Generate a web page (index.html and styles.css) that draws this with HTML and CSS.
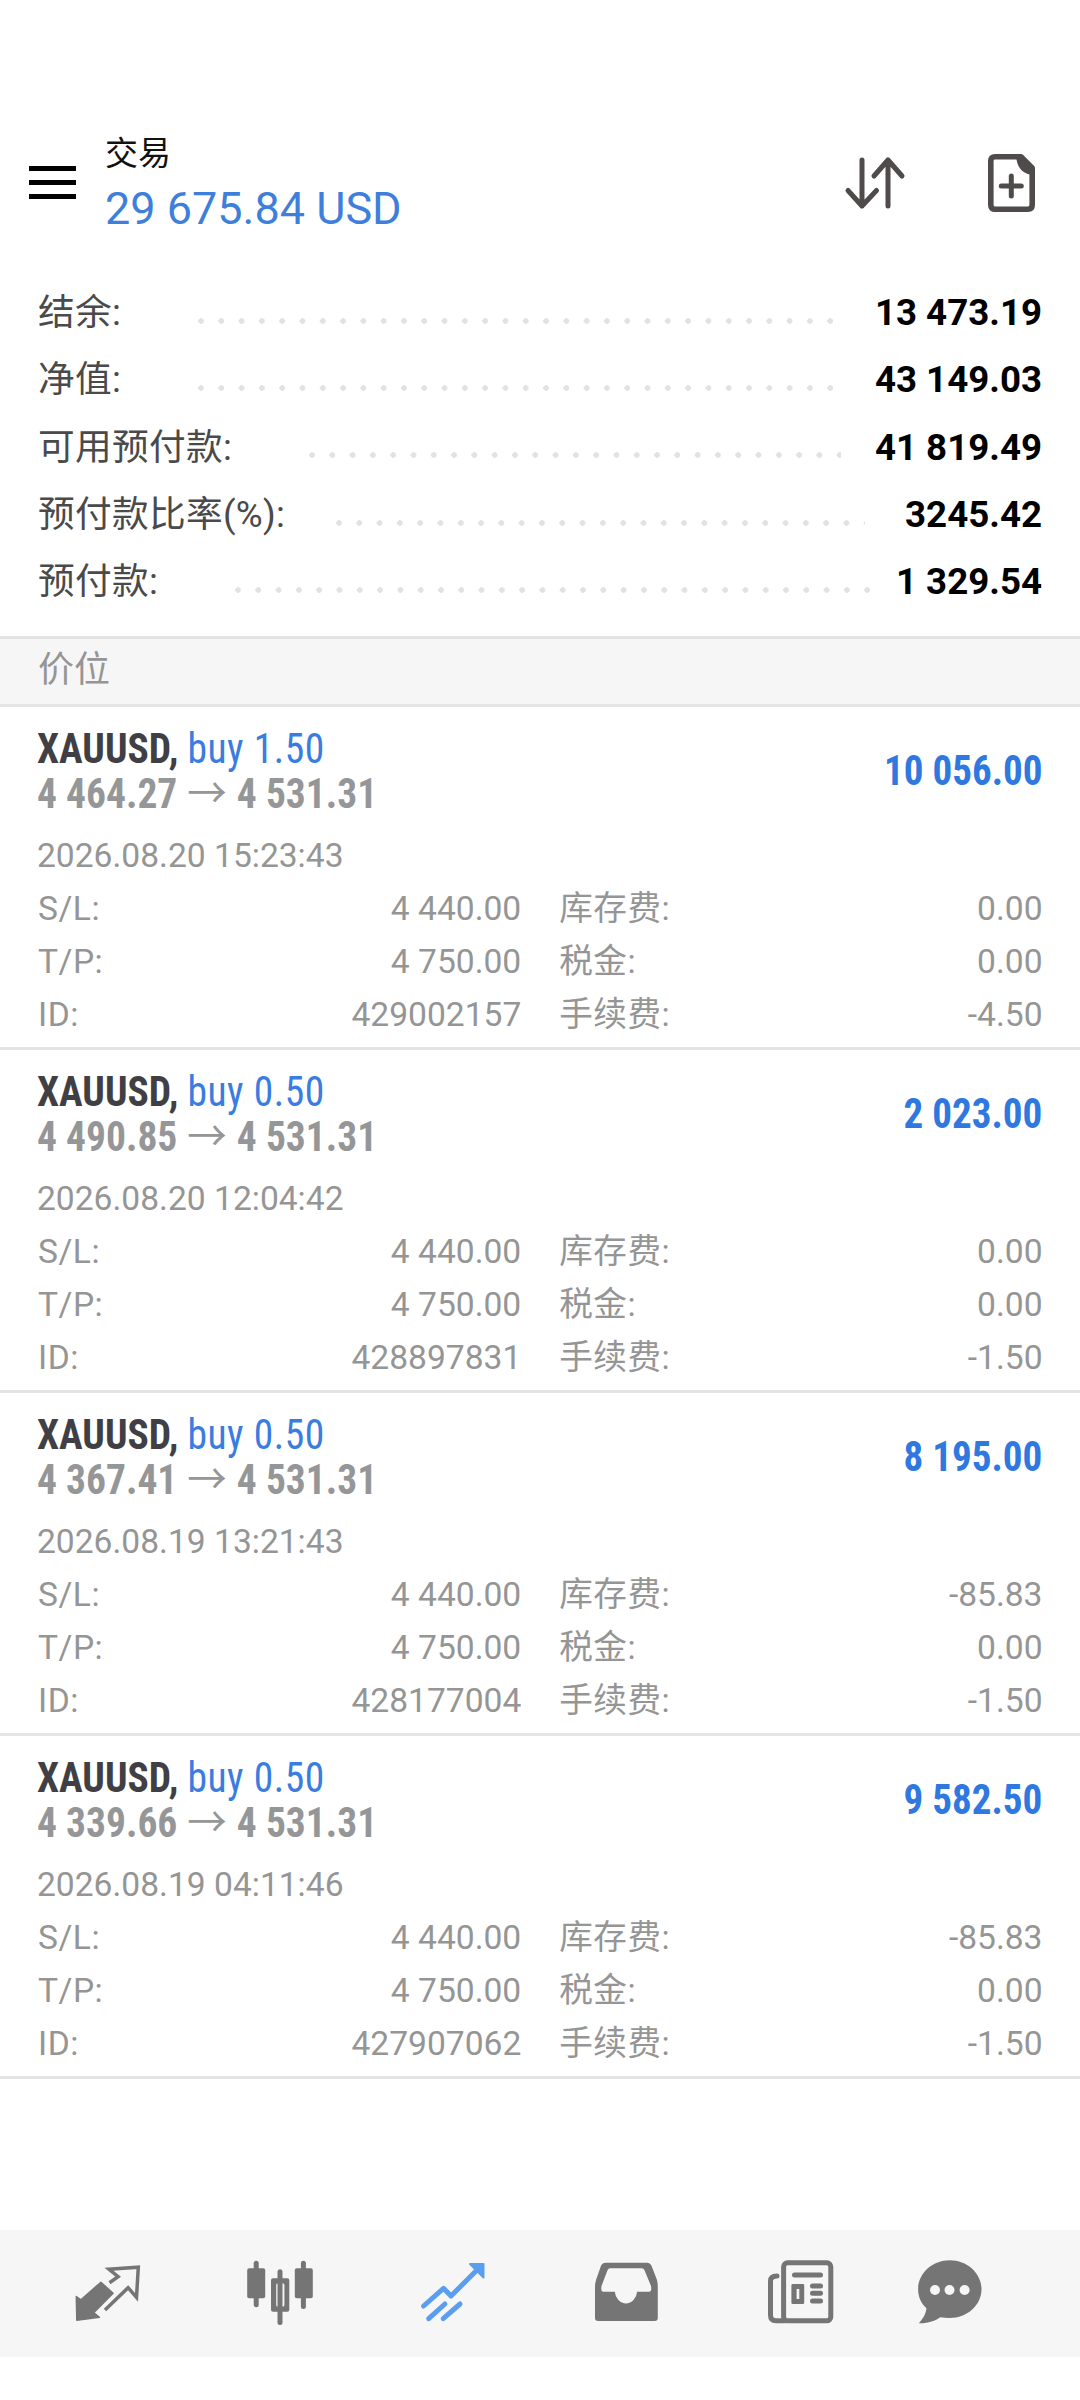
FILE: index.html
```html
<!DOCTYPE html>
<html lang="zh">
<head>
<meta charset="utf-8">
<title>交易</title>
<link rel="stylesheet" href="styles.css">
</head>
<body>
<div class="page">
  <header class="topbar">
    <div class="burger"><span></span><span></span><span></span></div>
    <div class="title">
      <div class="title-name">交易</div>
      <div class="title-value">29 675.84 USD</div>
    </div>
    <svg class="top-icon sort" viewBox="0 0 64 64"><path d="M18 8V54M4 38.500L18 54L32.500 38.500M44 54V8M30 24L44 8L58 24" fill="none" stroke="#4f4b4b" stroke-width="5" stroke-linecap="round" stroke-linejoin="round"/></svg>
    <svg class="top-icon file" viewBox="0 0 64 64"><path d="M15 4.800H41L52.200 16V53Q52.200 57.200 48 57.200H15Q10.800 57.200 10.800 53V9Q10.800 4.800 15 4.800Z" fill="none" stroke="#4f4b4b" stroke-width="5.600" stroke-linejoin="round"/><path d="M36 3H42L55 17V23Q37 23 36 3Z" fill="#4f4b4b"/><path d="M31.300 24V44M21.300 34H41.300" fill="none" stroke="#4f4b4b" stroke-width="5" stroke-linecap="round"/></svg>
  </header>

  <section class="summary">
    <div class="sum-row"><span class="sum-label">结余:</span><i class="dots dots-a"></i><b class="sum-value">13 473.19</b></div>
    <div class="sum-row"><span class="sum-label">净值:</span><i class="dots dots-a"></i><b class="sum-value">43 149.03</b></div>
    <div class="sum-row"><span class="sum-label">可用预付款:</span><i class="dots dots-b"></i><b class="sum-value">41 819.49</b></div>
    <div class="sum-row"><span class="sum-label">预付款比率(%):</span><i class="dots dots-c"></i><b class="sum-value">3245.42</b></div>
    <div class="sum-row"><span class="sum-label">预付款:</span><i class="dots dots-d"></i><b class="sum-value">1 329.54</b></div>
  </section>

  <div class="section-head">价位</div>

  <article class="card">
    <div class="card-head">
      <div>
        <div class="deal"><b>XAUUSD,</b> <span class="side">buy 1.50</span></div>
        <div class="prices">4 464.27 <span class="arrow">→</span> 4 531.31</div>
      </div>
      <div class="profit">10 056.00</div>
    </div>
    <div class="date">2026.08.20 15:23:43</div>
    <div class="stats">
      <div class="stat"><span>S/L:</span><span>4 440.00</span></div><div class="stat"><span>库存费:</span><span>0.00</span></div>
      <div class="stat"><span>T/P:</span><span>4 750.00</span></div><div class="stat"><span>税金:</span><span>0.00</span></div>
      <div class="stat"><span>ID:</span><span>429002157</span></div><div class="stat"><span>手续费:</span><span>-4.50</span></div>
    </div>
  </article>

  <article class="card">
    <div class="card-head">
      <div>
        <div class="deal"><b>XAUUSD,</b> <span class="side">buy 0.50</span></div>
        <div class="prices">4 490.85 <span class="arrow">→</span> 4 531.31</div>
      </div>
      <div class="profit">2 023.00</div>
    </div>
    <div class="date">2026.08.20 12:04:42</div>
    <div class="stats">
      <div class="stat"><span>S/L:</span><span>4 440.00</span></div><div class="stat"><span>库存费:</span><span>0.00</span></div>
      <div class="stat"><span>T/P:</span><span>4 750.00</span></div><div class="stat"><span>税金:</span><span>0.00</span></div>
      <div class="stat"><span>ID:</span><span>428897831</span></div><div class="stat"><span>手续费:</span><span>-1.50</span></div>
    </div>
  </article>

  <article class="card">
    <div class="card-head">
      <div>
        <div class="deal"><b>XAUUSD,</b> <span class="side">buy 0.50</span></div>
        <div class="prices">4 367.41 <span class="arrow">→</span> 4 531.31</div>
      </div>
      <div class="profit">8 195.00</div>
    </div>
    <div class="date">2026.08.19 13:21:43</div>
    <div class="stats">
      <div class="stat"><span>S/L:</span><span>4 440.00</span></div><div class="stat"><span>库存费:</span><span>-85.83</span></div>
      <div class="stat"><span>T/P:</span><span>4 750.00</span></div><div class="stat"><span>税金:</span><span>0.00</span></div>
      <div class="stat"><span>ID:</span><span>428177004</span></div><div class="stat"><span>手续费:</span><span>-1.50</span></div>
    </div>
  </article>

  <article class="card">
    <div class="card-head">
      <div>
        <div class="deal"><b>XAUUSD,</b> <span class="side">buy 0.50</span></div>
        <div class="prices">4 339.66 <span class="arrow">→</span> 4 531.31</div>
      </div>
      <div class="profit">9 582.50</div>
    </div>
    <div class="date">2026.08.19 04:11:46</div>
    <div class="stats">
      <div class="stat"><span>S/L:</span><span>4 440.00</span></div><div class="stat"><span>库存费:</span><span>-85.83</span></div>
      <div class="stat"><span>T/P:</span><span>4 750.00</span></div><div class="stat"><span>税金:</span><span>0.00</span></div>
      <div class="stat"><span>ID:</span><span>427907062</span></div><div class="stat"><span>手续费:</span><span>-1.50</span></div>
    </div>
  </article>

  <nav class="tabbar">
    <svg class="tab" viewBox="0 0 80 80"><path d="M9.300 43.500L13.900 46.800L33.900 29.200L46.100 40.300L26.700 59.700L32.400 64.300L9.800 67.200Z" fill="#757575" stroke="#757575" stroke-width="1.500" stroke-linejoin="round"/><path d="M42.500 29.700L51.100 23.700L42 16.300L71.300 14.200L69.500 44.300L61.100 34.700L38 57" fill="none" stroke="#757575" stroke-width="3.500"/></svg>
    <svg class="tab" viewBox="0 0 80 80"><g fill="#757575"><rect x="13.700" y="7.700" width="5" height="46.600" rx="2.500"/><rect x="7.200" y="15.300" width="18" height="30" rx="2"/><rect x="37.500" y="16.300" width="5" height="55.700" rx="2.500"/><path fill-rule="evenodd" d="M33 25.300H47.300Q49.300 25.300 49.300 27.300V56.700Q49.300 58.700 47.300 58.700H33Q31 58.700 31 56.700V27.300Q31 25.300 33 25.300ZM38 30.300Q36.200 30.300 36.200 32V52Q36.200 53.700 38 53.700H42.600Q44.400 53.700 44.400 52V32Q44.400 30.300 42.600 30.300Z"/><rect x="60.900" y="7.700" width="5" height="48.300" rx="2.500"/><rect x="54.800" y="15.300" width="18" height="30" rx="2"/></g></svg>
    <svg class="tab" viewBox="0 0 80 80"><g fill="none" stroke="#5b9ef0" stroke-width="5" stroke-linecap="round" stroke-linejoin="round"><path d="M10.600 53L30.500 35.300L38 43L67 14"/><path d="M15.700 65.700L31.900 51M30.200 65.700L47 51"/></g><path d="M57 11H70.500V24.500Z" fill="#5b9ef0" stroke="#5b9ef0" stroke-width="2" stroke-linejoin="round"/></svg>
    <svg class="tab" viewBox="0 0 80 80"><path fill="#757575" fill-rule="evenodd" d="M19.500 9.700H61Q64 9.700 65.500 12.700L71 27Q71.800 30 71.800 35V65Q71.800 68 68.800 68H12Q9 68 9 65V35Q9 30 10 27L15 12.700Q16.500 9.700 19.500 9.700ZM24 15.300Q22.500 15.300 21.500 17.300L15.500 33Q14.500 38.700 17.500 38.700H28.800A11.200 13 0 0 0 51.100 38.700H63Q66 38.700 65 33L58.500 17.300Q57.500 15.300 56 15.300Z"/></svg>
    <svg class="tab" viewBox="0 0 80 80"><rect x="24.600" y="9.800" width="47.200" height="58" rx="4" fill="none" stroke="#757575" stroke-width="5"/><path d="M18 23Q11.500 23 11.500 28V62Q11.500 67.800 17 67.800H26" fill="none" stroke="#757575" stroke-width="5" stroke-linecap="round"/><path d="M35.500 22H61.500M53.500 33H61.500M53.500 40.300H61.500M53.500 48H61.500" fill="none" stroke="#757575" stroke-width="5" stroke-linecap="round"/><path fill="#757575" fill-rule="evenodd" d="M34 31H44Q45.200 31 45.200 32.200V49.800Q45.200 51 44 51H34Q32.400 51 32.400 49.800V32.200Q32.400 31 34 31ZM37.600 36V46H40.300V36Z"/></svg>
    <svg class="tab tab-chat" viewBox="0 0 80 80"><path fill="#757575" d="M40.800 7.300C58.300 7.300 72.500 20.300 72.500 36.300C72.500 52.300 58.300 65 40.800 65C37.500 65 34.300 64.500 31.200 64.300C26 68 18 70.800 9.800 70.300C13.500 66.500 17 61 17.400 55.300C12 50.500 9.100 43.600 9.100 36.300C9.100 20.300 23.300 7.300 40.800 7.300Z"/><g fill="#f6f6f6"><circle cx="26" cy="37" r="5"/><circle cx="40.500" cy="37" r="5"/><circle cx="55.600" cy="37" r="5"/></g></svg>
  </nav>
</div>
</body>
</html>
```
FILE: styles.css
```css
* { box-sizing: border-box; }
html, body { margin: 0; padding: 0; background: #fff; }
body { font-family: Roboto, "Noto Sans CJK SC", sans-serif; }
.page { width: 1080px; height: 2400px; overflow: hidden; display: flex; flex-direction: column; }

.topbar { height: 279px; padding: 130px 0 0 29px; display: flex; align-items: flex-start; }
.burger { width: 47px; margin-top: 36px; display: flex; flex-direction: column; gap: 9px; }
.burger span { display: block; height: 5px; background: #000; }
.title { margin-left: 29px; flex: 1; }
.title-name { font-size: 33px; line-height: 46px; color: #111; padding-top: 1px; }
.title-value { font-size: 45px; line-height: 56px; color: #3f7fdc; margin-top: 4px; }
.top-icon { width: 64px; height: 64px; flex: none; margin-top: 22px; }
.sort { margin-right: 72px; }
.file { margin-right: 36px; }

.summary { padding: 0 38px 21px; border-bottom: 3px solid #e4e4e4; }
.sum-row { height: 67.3px; display: flex; align-items: center; font-size: 36.700px; line-height: 67px; }
.sum-label { color: #4a4a4a; letter-spacing: 0.3px; }
.sum-value { color: #000; font-weight: 700; }
.dots { flex: 1; height: 6px; margin-top: 16px; margin-left: 77px; background: radial-gradient(circle at 3px 3px, #e2e2e2 2.6px, transparent 3px) 0 0 / 20.3px 6px repeat-x; }
.dots-a { margin-right: 42px; }
.dots-b { margin-right: 34px; }
.dots-c { margin-right: 40px; margin-left: 51px; }
.dots-d { margin-right: 26px; }

.section-head { height: 68px; padding-left: 38px; line-height: 62px; font-size: 36px; color: #959595; background: #f6f6f6; border-bottom: 3px solid #e4e4e4; }

.card { height: 343px; padding: 21px 37px 7px 37px; border-bottom: 3px solid #e4e4e4; flex: none; }
.card-head { display: flex; justify-content: space-between; align-items: center; padding-right: 1px; }
.deal, .prices { font-family: "Roboto Condensed", "Liberation Sans Narrow", Roboto, sans-serif; font-stretch: 75%; font-size: 42px; white-space: nowrap; transform: scaleX(0.94); transform-origin: left center; }
.deal { line-height: 41px; }
.prices { line-height: 44px; color: #959697; font-weight: 700; }
.deal b { color: #3f3f45; font-weight: 700; }
.side { color: #3a7ce0; letter-spacing: 0.6px; }
.arrow { font-family: "Noto Sans CJK SC", sans-serif; font-weight: 400; line-height: 1; margin: 0 1px; }
.profit { font-family: "Roboto Condensed", "Liberation Sans Narrow", Roboto, sans-serif; font-stretch: 75%; font-size: 42px; font-weight: 700; color: #2f78e0; margin-top: -3px; transform: scaleX(0.93); transform-origin: right center; }
.date { margin-top: 13px; font-size: 33.600px; line-height: 53px; color: #959595; }
.stats { display: grid; grid-template-columns: 1fr 1fr; column-gap: 38px; padding-left: 1px; padding-right: 0.5px; }
.stat { height: 53px; display: flex; justify-content: space-between; font-size: 33.600px; line-height: 53px; color: #959595; }
.stat span:first-child { letter-spacing: 0.5px; }

.tabbar { margin-top: auto; margin-bottom: 43px; height: 127px; flex: none; background: #f6f6f6; padding: 23px 0 0 67px; display: flex; align-items: flex-start; gap: 93px; }
.tab { width: 80px; height: 80px; flex: none; }
.tab-chat { margin-left: -23px; }
```
